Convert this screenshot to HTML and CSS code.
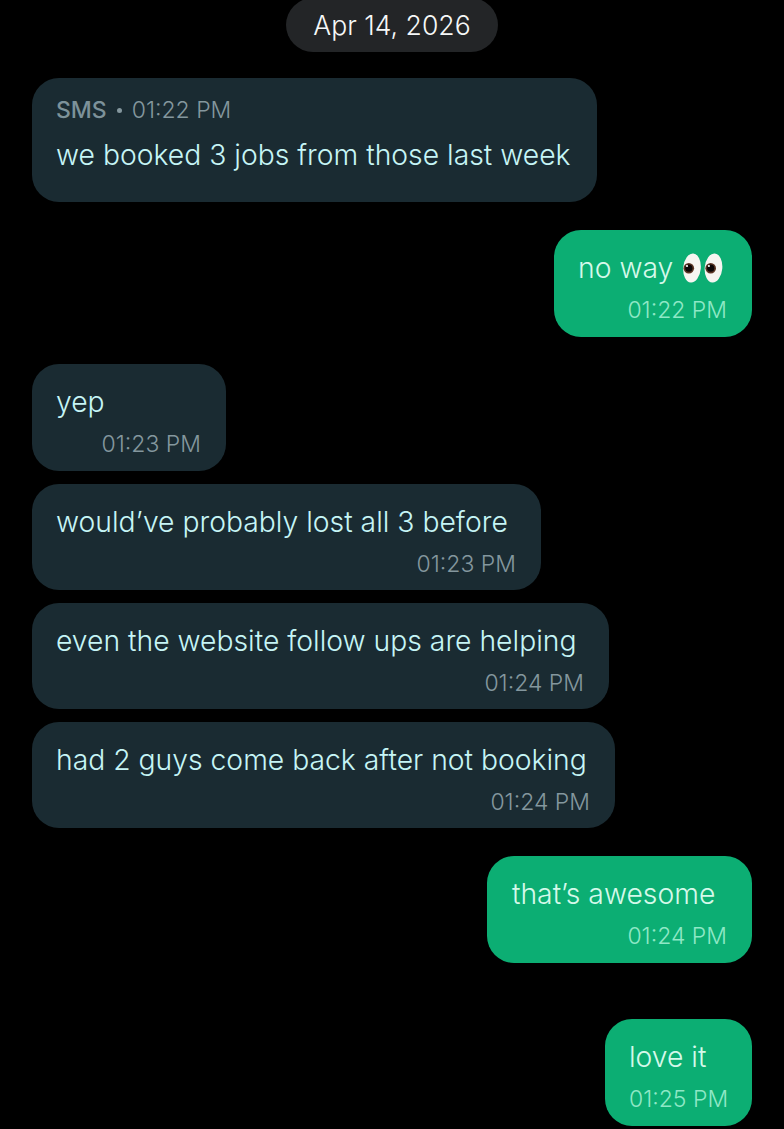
FILE: index.html
```html
<!doctype html>
<html lang="en">
 <head>
  <meta charset="UTF-8">
  <title>Messages</title>
  <meta name="viewport" content="width=device-width, initial-scale=1.0">
  <link rel="stylesheet" href="styles.css">
 </head>
 <body>
  <div class="thread">
   <div class="datePill">Apr 14, 2026</div>

   <div class="bubble in first">
    <div class="meta">
     <span class="source">SMS</span><span class="dot"></span><span>01:22 PM</span>
    </div>
    <div class="text">we booked 3 jobs from those last week</div>
   </div>

   <div class="bubble out group noWay">
    <div class="text">no way
     <svg class="eyes" viewBox="0 0 41 30" aria-label="eyes">
      <ellipse cx="9" cy="15" rx="8.8" ry="14.6" fill="#f6f5f1" transform="rotate(5 9 15)"/>
      <ellipse cx="30.5" cy="15" rx="8.8" ry="14.6" fill="#f6f5f1" transform="rotate(5 30.5 15)"/>
      <circle cx="5.8" cy="15.2" r="5.3" fill="#5a3524"/>
      <circle cx="27.7" cy="15.2" r="5.3" fill="#5a3524"/>
      <circle cx="5.8" cy="15.2" r="3.6" fill="#0c0606"/>
      <circle cx="27.7" cy="15.2" r="3.6" fill="#0c0606"/>
      <circle cx="4" cy="13" r="1.1" fill="#fff"/>
      <circle cx="25.9" cy="13" r="1.1" fill="#fff"/>
     </svg>
    </div>
    <div class="time">01:22 PM</div>
   </div>

   <div class="bubble in group yep">
    <div class="text">yep</div>
    <div class="time">01:23 PM</div>
   </div>
   <div class="bubble in lost">
    <div class="text">would’ve probably lost all 3 before</div>
    <div class="time">01:23 PM</div>
   </div>
   <div class="bubble in website">
    <div class="text">even the website follow ups are helping</div>
    <div class="time">01:24 PM</div>
   </div>
   <div class="bubble in guys">
    <div class="text">had 2 guys come back after not booking</div>
    <div class="time">01:24 PM</div>
   </div>

   <div class="bubble out group awesome">
    <div class="text">that’s awesome</div>
    <div class="time">01:24 PM</div>
   </div>

   <div class="bubble out loveIt">
    <div class="text">love it</div>
    <div class="time">01:25 PM</div>
   </div>
  </div>
 </body>
</html>
```
FILE: styles.css
```css
html, body {
  margin: 0;
  padding: 0;
  height: 100%;
  background: #000;
}

body {
  font-family: "Inter", "Liberation Sans", sans-serif;
  overflow: hidden;
}

.thread {
  display: flex;
  flex-direction: column;
  align-items: flex-start;
  gap: 13px;
  padding: 0 32px;
}

.datePill {
  align-self: center;
  box-sizing: border-box;
  width: 212px;
  height: 54px;
  margin-top: -2px;
  margin-bottom: 13px;
  line-height: 54px;
  text-align: center;
  border-radius: 27px;
  background: #232527;
  color: #f6f8f8;
  font-size: 26.6px;
  font-weight: 350;
}

.bubble {
  box-sizing: border-box;
  height: 106px;
  padding: 18px 25px 0 24px;
  border-radius: 27px;
}

.bubble.in {
  background: #1a2b32;
  color: #c6f5f6;
}

.bubble.out {
  align-self: flex-end;
  height: 107px;
  background: #0cae73;
  color: #d5f9ea;
}

.bubble.group {
  margin-top: 15px;
}

/* widths and the odd gaps don't follow the text exactly, so set per bubble */
.first { width: 565px; height: 124px; padding-top: 16px; }
.noWay { width: 198px; }
.yep { width: 194px; height: 107px; margin-top: 14px !important; }
.lost { width: 509px; }
.website { width: 577px; }
.guys { width: 583px; }
.awesome { width: 265px; padding-left: 25px; }
.loveIt { width: 147px; margin-top: 43px; }

.text {
  font-size: 28.3px;
  font-weight: 350;
  line-height: 40px;
  white-space: nowrap;
}

.eyes {
  width: 41px;
  height: 30px;
  margin-left: 2px;
  vertical-align: -5px;
}

.time {
  margin-top: 6px;
  text-align: right;
  font-size: 23px;
  font-weight: 350;
  line-height: 32px;
  white-space: nowrap;
  color: #84979e;
}

.bubble.out .time {
  color: #8fe8c6;
}

.meta {
  display: flex;
  align-items: center;
  height: 32px;
  margin-bottom: 9px;
  font-size: 23px;
  font-weight: 350;
  color: #84979e;
}

.source {
  font-weight: 450;
  color: #7d929a;
}

.dot {
  width: 5px;
  height: 5px;
  margin: 0 10px;
  border-radius: 50%;
  background: #84979e;
}
```
